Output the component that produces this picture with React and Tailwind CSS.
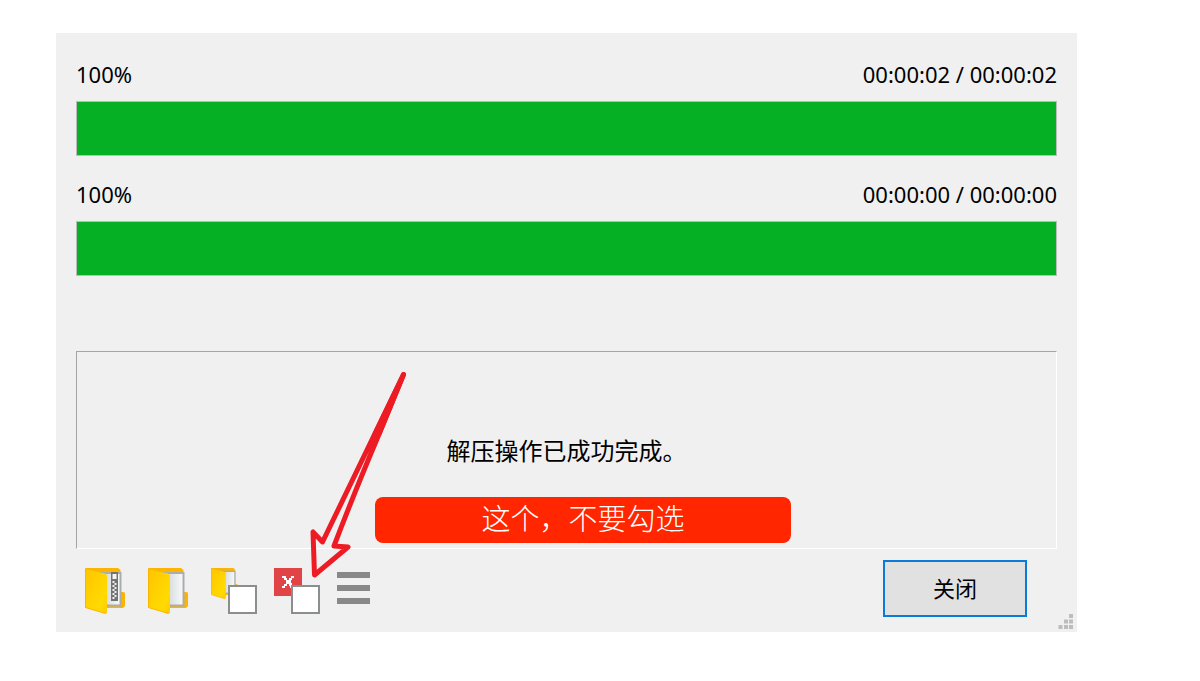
import React from 'react';

const timers = [
  { id: 'current', label: 'Current file', percent: 100, time: '00:00:02 / 00:00:02' },
  { id: 'total', label: 'Total', percent: 100, time: '00:00:00 / 00:00:00' },
];

const zipperTeeth = [13, 15, 17, 19, 21, 23, 25, 27, 29];

const FolderIcon = ({ zipped = false, className }) => (
  <svg viewBox="0 0 40 46" className={className} aria-hidden="true">
    <defs>
      <linearGradient id="flap" x1="0" y1="0" x2="1" y2="1">
        <stop offset="0" stopColor="#ffc400" />
        <stop offset="0.75" stopColor="#ffdb00" />
        <stop offset="1" stopColor="#ffc800" />
      </linearGradient>
      <linearGradient id="page" x1="0" y1="0" x2="1" y2="0">
        <stop offset="0" stopColor="#c8cccc" />
        <stop offset="0.6" stopColor="#e4e8e8" />
        <stop offset="1" stopColor="#f8f8f8" />
      </linearGradient>
    </defs>
    <path d="M0 1Q0 0 1 0H33L35.500 2V24H38.500Q40 24 40 25.500V38L38 40H20L0 38Z" fill="#fdb400" />
    <path d="M14 4H36.500V38.500H14Z" fill="#a9adb0" />
    <path d="M14 6H34.500V36.500H14Z" fill="url(#page)" />
    {zipped && (
      <g>
        <path d="M26 4H33V33H26Z" fill="#737373" />
        <path d="M27.500 6H31.500V11H27.500Z" fill="#f4f4f4" />
        {zipperTeeth.map((y, i) => (
          <rect key={y} x={i % 2 === 0 ? 27.5 : 29.5} y={y} width="2" height="2" fill="#f0f0f0" />
        ))}
      </g>
    )}
    <path d="M0 1L20 5.500Q22 6 22 8V44Q22 46 20 45.500L0 39.500Z" fill="url(#flap)" />
    <path d="M0.500 1V39.500L20.500 45.500" fill="none" stroke="#fbb400" strokeWidth="1" />
  </svg>
);

const ErrorIcon = () => (
  <svg viewBox="0 0 28 28" className="w-7 h-7" shapeRendering="crispEdges" aria-hidden="true">
    <path d="M0 0H28V28H0Z" fill="#e04446" />
    <path
      d="M8 8H12V10H13V12H15V10H17V8H20V10H18V12H17V15H18V17H20V20H16V18H15V16H13V18H11V20H8V18H10V16H12V12H10V10H8Z"
      fill="#fff"
    />
  </svg>
);

const ToggleIcon = ({ label, children }) => (
  <label className="relative block w-[46px] h-[46px]">
    {children}
    <input
      type="checkbox"
      aria-label={label}
      className="absolute right-0 bottom-0 w-[29px] h-[29px] appearance-none bg-white border-2 border-[#8b8e8e]"
    />
  </label>
);

const SizeGrip = () => (
  <svg viewBox="0 0 15 15" className="absolute right-1 bottom-[3px] w-[15px] h-[15px]" fill="#bdbdbd" aria-hidden="true">
    <path d="M11 0h4v4h-4zM6 5.500h4v4h-4zM11 5.500h4v4h-4zM0.500 11h4v4h-4zM6 11h4v4h-4zM11 11h4v4h-4z" />
  </svg>
);

const App = () => {
  return (
    <div className="bg-white pt-[33px] pl-14 pr-[123px] pb-12 text-black font-['Noto_Sans','Noto_Sans_CJK_SC',sans-serif]">
      <div className="relative bg-[#f0f0f0] px-5 pt-5">
        {/* Progress */}
        <div className="flex flex-col gap-[17px]">
          {timers.map((item) => (
            <div key={item.id}>
              <div className="flex h-[42px] items-center justify-between text-[22px] mb-1.5">
                <span>{item.percent}%</span>
                <span>{item.time}</span>
              </div>
              <div
                role="progressbar"
                aria-label={item.label}
                aria-valuenow={item.percent}
                className="h-[55px] border border-[#bcbcbc] bg-[#e6e6e6]"
              >
                <div className="h-full bg-[#06b025]" style={{ width: `${item.percent}%` }} />
              </div>
            </div>
          ))}
        </div>

        {/* Message */}
        <div className="relative mt-[75px] flex h-[198px] items-center justify-center border border-t-[#a5a5a5] border-l-[#a5a5a5] border-r-white border-b-white">
          <p className="text-2xl font-['Noto_Sans_CJK_SC',sans-serif]">解压操作已成功完成。</p>
          <div className="absolute left-[298px] top-[145px] flex h-[46px] w-[416px] items-center justify-center rounded-lg bg-[#ff2600] pb-1 text-[29px] font-light text-white font-['Noto_Sans_CJK_SC',sans-serif]">
            这个，不要勾选
          </div>
        </div>

        {/* Toolbar */}
        <div className="flex h-[83px] items-start justify-between pt-[11px] pl-[9px] pr-[30px]">
          <div className="flex gap-[17px] pt-2">
            <button aria-label="Open archive" className="w-[46px] h-[46px]">
              <FolderIcon zipped className="w-10 h-[46px]" />
            </button>
            <button aria-label="Open folder" className="w-[46px] h-[46px]">
              <FolderIcon className="w-10 h-[46px]" />
            </button>
            <ToggleIcon label="Open folder when done">
              <FolderIcon className="w-[27px] h-[31px]" />
            </ToggleIcon>
            <ToggleIcon label="Close when done">
              <ErrorIcon />
            </ToggleIcon>
            <button aria-label="Menu" className="flex flex-col gap-[7px] pt-1">
              <span className="block w-[33px] h-1.5 bg-[#888]" />
              <span className="block w-[33px] h-1.5 bg-[#888]" />
              <span className="block w-[33px] h-1.5 bg-[#888]" />
            </button>
          </div>
          <button className="h-[57px] w-36 border-2 border-[#0a7bd8] bg-[#e1e1e1] pb-0.5 text-[22px] font-['Noto_Sans_CJK_SC',sans-serif]">
            关闭
          </button>
        </div>
        <SizeGrip />

        {/* Hand-drawn arrow */}
        <svg
          viewBox="0 0 104 212"
          className="pointer-events-none absolute left-[250px] top-[337px] w-[104px] h-[212px]"
          fill="none"
          stroke="#ed1c24"
          strokeLinejoin="round"
          strokeLinecap="round"
          aria-hidden="true"
        >
          <path d="M97.500 4.500L16.500 172L7 162L8.500 205L42 177L28 176Q47 126 71 69Z" strokeWidth="5" />
          <path d="M97.500 4.500L69 64L73 64Z" fill="#ed1c24" strokeWidth="5" />
        </svg>
      </div>
    </div>
  );
};

export default App;
